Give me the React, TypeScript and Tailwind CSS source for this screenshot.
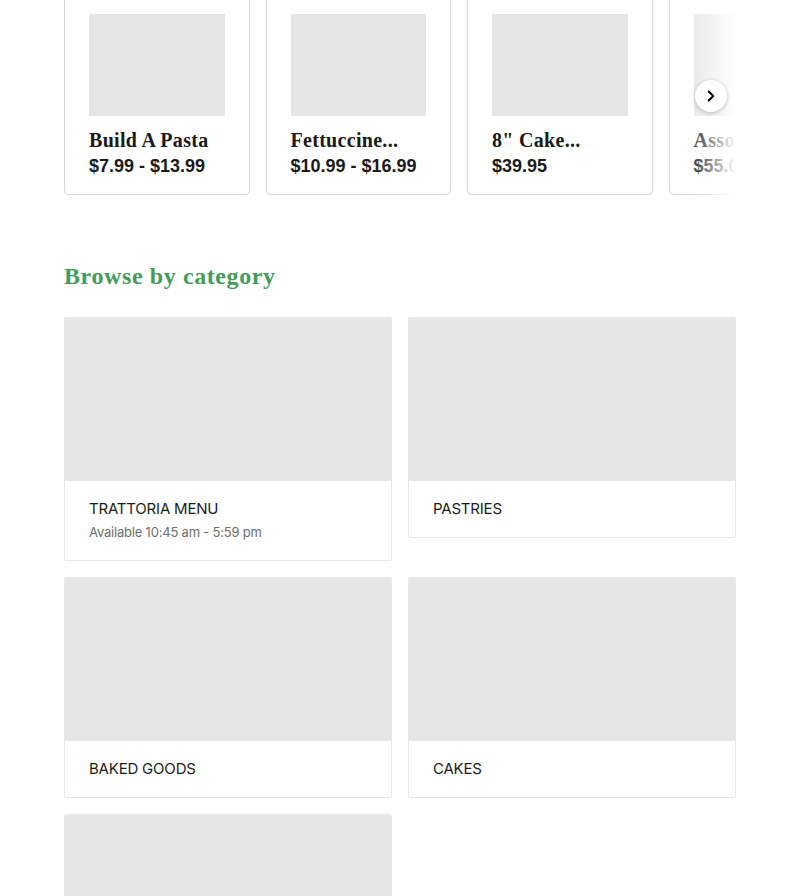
import { ChevronRight } from 'lucide-react';

interface Product {
  name: string;
  price: string;
}

interface Category {
  name: string;
  note?: string;
}

const products: Product[] = [
  { name: 'Build A Pasta', price: '$7.99 - $13.99' },
  { name: 'Fettuccine...', price: '$10.99 - $16.99' },
  { name: '8" Cake...', price: '$39.95' },
  { name: 'Assorted...', price: '$55.00' },
];

const categories: Category[] = [
  { name: 'TRATTORIA MENU', note: 'Available 10:45 am - 5:59 pm' },
  { name: 'PASTRIES' },
  { name: 'BAKED GOODS' },
  { name: 'CAKES' },
  { name: 'COOKIES' },
];

function ProductCard({ product }: { product: Product }) {
  return (
    <div className="w-[185.5px] flex-shrink-0 border border-[#d6d6d6] rounded-b-[5px] bg-white px-6 pt-6 pb-[16px] shadow-[0_1px_2px_rgba(0,0,0,0.06)]">
      <div className="h-[102px] bg-[#e6e6e6]" />
      <p className="mt-[12px] text-[20px] leading-6 font-bold tracking-[0.3px] text-[#1a1a1a] whitespace-nowrap font-['Liberation_Serif',serif]">
        {product.name}
      </p>
      <p className="mt-[2px] text-[18px] leading-6 font-bold text-[#1a1a1a] whitespace-nowrap font-['Liberation_Sans',sans-serif]">
        {product.price}
      </p>
    </div>
  );
}

function CategoryCard({ category }: { category: Category }) {
  return (
    <div className="border border-[#e8e8e8] rounded-[2px] bg-white self-start">
      <div className="h-[163px] bg-[#e6e6e6]" />
      <div className="px-6 py-[18px]">
        <p className="text-[15px] leading-5 text-[#1c1c1c] tracking-[-0.2px] font-['Inter',sans-serif]">
          {category.name}
        </p>
        {category.note && (
          <p className="mt-[3px] text-[13px] leading-5 text-[#6e6e6e] tracking-[-0.2px] font-['Inter',sans-serif]">
            {category.note}
          </p>
        )}
      </div>
    </div>
  );
}

export default function App() {
  return (
    <div className="h-[896px] bg-white overflow-hidden">
      <div className="w-[672px] ml-16 -mt-[11px]">
        <div className="relative overflow-hidden">
          <div className="flex gap-4">
            {products.map((p) => (
              <ProductCard key={p.name} product={p} />
            ))}
          </div>
          <div className="absolute top-0 bottom-0 right-0 w-[50px] bg-gradient-to-r from-white/0 to-white" />
          <button
            type="button"
            className="absolute right-[9px] top-[91px] w-8 h-8 rounded-full bg-white flex items-center justify-center shadow-[0_1px_4px_rgba(0,0,0,0.25)]"
          >
            <ChevronRight className="w-[18px] h-[18px] text-black" strokeWidth={2.6} />
          </button>
        </div>

        <h2 className="mt-[65px] text-[24px] leading-8 font-bold tracking-[0.6px] text-[#469a5b] font-['Liberation_Serif',serif]">
          Browse by category
        </h2>

        <div className="mt-[25px] grid grid-cols-2 gap-4">
          {categories.map((c) => (
            <CategoryCard key={c.name} category={c} />
          ))}
        </div>
      </div>
    </div>
  );
}
